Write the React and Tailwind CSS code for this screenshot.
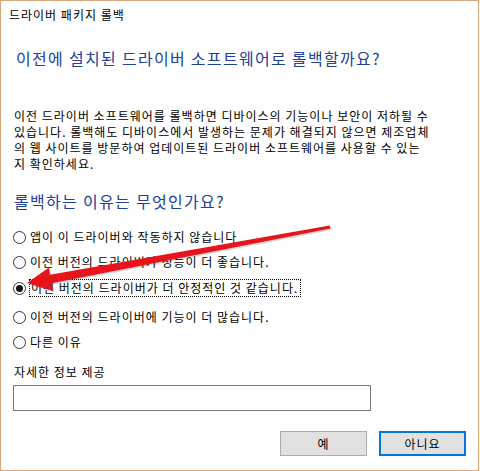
import React from 'react';

const reasons = [
  { text: '앱이 이 드라이버와 작동하지 않습니다', mt: 'mt-[15px]' },
  { text: '이전 버전의 드라이버가 성능이 더 좋습니다.', mt: 'mt-[5px]' },
  { text: '이전 버전의 드라이버가 더 안정적인 것 같습니다.', mt: 'mt-[6px]', checked: true },
  { text: '이전 버전의 드라이버에 기능이 더 많습니다.', mt: 'mt-[9px]' },
  { text: '다른 이유', mt: 'mt-[5px]' },
];

const Radio = ({ checked }) => (
  <span className="w-[13px] h-[13px] rounded-full border border-[#333] bg-white flex items-center justify-center shrink-0">
    {checked && <span className="w-[7px] h-[7px] rounded-full bg-[#111]" />}
  </span>
);

// red pointer drawn over the dialog
const arrowPts = '26,282 48,266.5 49,273.8 328.8,224.6 329.4,227.4 50.6,282.2 52,290';

const Arrow = () => (
  <svg className="absolute inset-0 pointer-events-none" width="480" height="471" viewBox="0 0 480 471">
    <polygon points={arrowPts} fill="#000" opacity="0.16" transform="translate(1.5 1.5)" />
    <polygon points={arrowPts} fill="#e8141c" />
  </svg>
);

export default function App() {
  return (
    <div className="relative w-[479px] h-[471px] bg-white border border-[#d9a77c] font-['Noto_Sans_CJK_KR',sans-serif] text-[12px] text-black tracking-[1px] overflow-hidden">
      <div className="ml-[8px] mt-[6px] leading-[16px]">드라이버 패키지 롤백</div>

      <h1 className="ml-[15px] mt-[24px] text-[16px] leading-[22px] tracking-[1.3px] text-[#21409a]">
        이전에 설치된 드라이버 소프트웨어로 롤백할까요?
      </h1>

      <div className="ml-[13px] mt-[39px] leading-[16px] whitespace-nowrap">
        <div>이전 드라이버 소프트웨어를 롤백하면 디바이스의 기능이나 보안이 저하될 수</div>
        <div>있습니다. 롤백해도 디바이스에서 발생하는 문제가 해결되지 않으면 제조업체</div>
        <div>의 웹 사이트를 방문하여 업데이트된 드라이버 소프트웨어를 사용할 수 있는</div>
        <div>지 확인하세요.</div>
      </div>

      <h2 className="ml-[13px] mt-[18px] text-[16px] leading-[22px] tracking-[1.3px] text-[#21409a]">
        롤백하는 이유는 무엇인가요?
      </h2>

      <div className="flex flex-col ml-[12px]">
        {reasons.map((r) => (
          <label key={r.text} className={`flex items-center h-[20px] ${r.mt}`}>
            <Radio checked={r.checked} />
            <span
              className={
                r.checked
                  ? 'ml-[3px] pl-[1px] pr-[2px] h-[18px] leading-[16px] border border-dotted border-black'
                  : 'ml-[4px] leading-[16px]'
              }
            >
              {r.text}
            </span>
          </label>
        ))}
      </div>

      <div className="ml-[13px] mt-[12px] leading-[16px]">자세한 정보 제공</div>
      <div className="ml-[12px] mt-[5px] w-[358px] h-[26px] border border-[#7a7a7a] bg-white" />

      <div className="flex justify-end gap-[12px] mr-[12px] mt-[20px]">
        <button className="w-[87px] h-[25px] bg-[#e1e1e1] border border-[#adadad] leading-[16px]">예</button>
        <button className="w-[87px] h-[25px] bg-[#e1e1e1] border-2 border-[#0078d7] leading-[16px]">아니요</button>
      </div>

      <Arrow />
    </div>
  );
}
